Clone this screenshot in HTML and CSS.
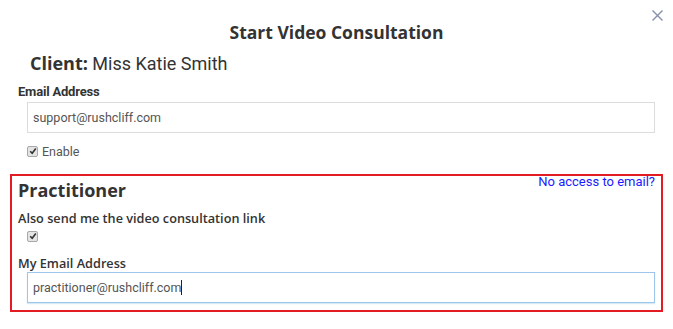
FILE: index.html
```html
<!DOCTYPE html>
<html>
<head>
<meta charset="utf-8">
<link rel="stylesheet" href="styles.css">
</head>
<body>
<div class="modal">
  <div class="header">
    <h1 class="title">Start Video Consultation</h1>
    <span class="close"><svg width="11" height="11" viewBox="0 0 11 11"><path d="M0.5 0.5L10.5 10.5M10.5 0.5L0.5 10.5" stroke="#8790aa" stroke-width="1.4" fill="none"/></svg></span>
  </div>
  <div class="client"><span class="client-label">Client:</span> Miss Katie Smith</div>
  <div class="field">
    <label class="label-roboto">Email Address</label>
    <div class="input">support@rushcliff.com</div>
    <div class="check-row"><span class="cb"><svg width="8" height="8" viewBox="0 0 8 8"><path d="M1.2 4.2L3.2 6.2L6.8 1.6" stroke="#333" stroke-width="1.6" fill="none"/></svg></span><span class="check-text">Enable</span></div>
  </div>
  <div class="practitioner">
    <div class="prac-head">
      <h2 class="prac-title">Practitioner</h2>
      <a class="no-access">No access to email?</a>
    </div>
    <label class="label-open">Also send me the video consultation link</label>
    <div class="check-row solo"><span class="cb"><svg width="8" height="8" viewBox="0 0 8 8"><path d="M1.2 4.2L3.2 6.2L6.8 1.6" stroke="#333" stroke-width="1.6" fill="none"/></svg></span></div>
    <label class="label-open my-email">My Email Address</label>
    <div class="input focused">practitioner@rushcliff.com<span class="caret"></span></div>
  </div>
</div>
</body>
</html>
```
FILE: styles.css
```css
html, body {
  margin: 0;
  padding: 0;
  background: #fff;
}
body {
  font-family: Roboto, "Liberation Sans", sans-serif;
  color: #333;
}
.modal {
  width: 673px;
  height: 329px;
  box-sizing: border-box;
}
.header {
  position: relative;
  height: 50px;
}
.title {
  margin: 0;
  padding-top: 21px;
  text-align: center;
  font-family: "Open Sans", sans-serif;
  font-weight: 700;
  font-size: 17.5px;
  line-height: 22px;
  color: #333;
}
.close {
  position: absolute;
  right: 10px;
  top: 10px;
  width: 11px;
  height: 11px;
  display: block;
}
.close svg { display: block; }
.client {
  padding-left: 30px;
  font-size: 18px;
  line-height: 24px;
  margin-top: 1px;
  color: #333;
}
.client-label {
  font-family: "Open Sans", sans-serif;
  font-weight: 700;
  font-size: 18px;
}
.field {
  padding: 0 18px;
  margin-top: 7px;
}
.label-roboto {
  display: block;
  font-family: Roboto, sans-serif;
  font-weight: 700;
  font-size: 13px;
  line-height: 17px;
  color: #333;
  letter-spacing: -0.2px;
}
.input {
  margin: 2px 0 0 9px;
  height: 31px;
  box-sizing: border-box;
  border: 1px solid #dcdcdc;
  padding: 0 5px;
  font-family: Roboto, sans-serif;
  font-size: 12.5px;
  line-height: 29px;
  color: #555;
}
.input.focused {
  border-color: #9cc6ea;
  box-shadow: 0 1px 1px rgba(156,198,234,0.4);
}
.caret {
  display: inline-block;
  width: 1px;
  height: 15px;
  background: #222;
  vertical-align: -3px;
}
.check-row {
  display: flex;
  align-items: center;
  margin: 10px 0 0 9px;
  height: 16px;
}
.cb {
  width: 9px;
  height: 9px;
  border: 1px solid #a8a8a8;
  border-radius: 2px;
  background: #e4e4e4;
  display: flex;
  align-items: center;
  justify-content: center;
}
.cb svg { display: block; }
.check-text {
  margin-left: 4px;
  font-size: 12.5px;
  color: #555;
}
.practitioner {
  margin: 15px 10px 0 10px;
  height: 138px;
  box-sizing: border-box;
  border: 2px solid #e31b23;
  padding: 0 6px 0 6px;
}
.prac-head {
  display: flex;
  justify-content: space-between;
  align-items: flex-start;
}
.prac-title {
  margin: 0;
  padding-top: 2px;
  font-family: "Open Sans", sans-serif;
  font-weight: 700;
  font-size: 18px;
  line-height: 24px;
  color: #333;
}
.no-access {
  font-family: Roboto, sans-serif;
  font-size: 13px;
  line-height: 14px;
  color: #1a1aff;
  margin-top: -1px;
  cursor: pointer;
}
.label-open {
  display: block;
  margin-top: 8px;
  font-family: "Open Sans", sans-serif;
  font-weight: 600;
  font-size: 12.7px;
  line-height: 17px;
  color: #333;
}
.check-row.solo {
  margin-top: 1px;
}
.my-email {
  margin-top: 11px;
}
.practitioner .input {
  margin-top: 0;
}
```
